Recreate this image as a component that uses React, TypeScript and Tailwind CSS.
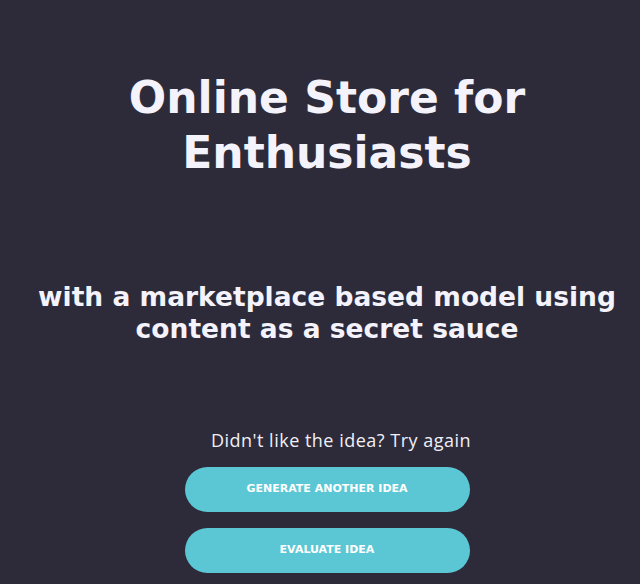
export default function App() {
  return (
    <div className="min-h-[584px] w-full bg-[#2d2b3a] pl-[14px] flex flex-col items-center text-center font-['DejaVu_Sans',sans-serif] text-[#f4f2fb]">
      <h1 className="mt-[70px] text-[44px] leading-[55px] font-bold max-w-[440px]">
        Online Store for Enthusiasts
      </h1>
      <p className="mt-[101px] text-[26.5px] leading-[32px] font-bold max-w-[610px]">
        with a marketplace based model using content as a secret sauce
      </p>
      <p className="mt-[82px] pl-[28px] text-[18px] leading-[26px] tracking-[0.5px] font-['Open_Sans',sans-serif] text-[#f1eff6]">
        Didn't like the idea? Try again
      </p>
      <div className="mt-[14px] flex flex-col gap-[16px]">
        <button className="w-[285px] h-[45px] rounded-full bg-[#5bc7d5] text-white text-[11px] font-bold uppercase">
          Generate another idea
        </button>
        <button className="w-[285px] h-[45px] rounded-full bg-[#5bc7d5] text-white text-[11px] font-bold uppercase">
          Evaluate idea
        </button>
      </div>
    </div>
  );
}
